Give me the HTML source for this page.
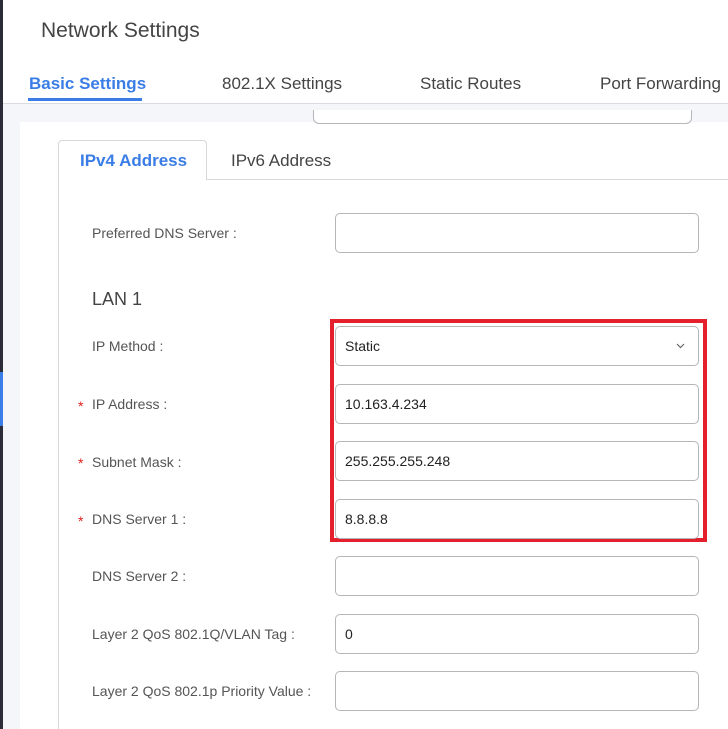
<!DOCTYPE html>
<html><head><meta charset="utf-8"><style>
*{box-sizing:border-box;margin:0;padding:0}
body{width:728px;height:729px;overflow:hidden;background:#f4f6f9;font-family:"Liberation Sans",sans-serif;position:relative}
.a{position:absolute}
.lab{position:absolute;left:92px;font-size:14px;color:#555;}
.ast{position:absolute;left:78px;color:#e02020;font-size:14px}
.in{position:absolute;left:335px;width:364px;height:40px;border:1px solid #b4b6ba;border-radius:5px;background:#fff;font-size:14px;color:#222;padding:11px 9px}
</style></head><body>
<div class="a" style="left:0;top:0;width:3px;height:729px;background:#2a2d37"></div>
<div class="a" style="left:0;top:372px;width:3px;height:54px;background:#3b7de6"></div>
<div class="a" style="left:3px;top:0;width:725px;height:104px;background:#fff;border-bottom:1px solid #d8dbe0"></div>
<div class="a" style="left:41px;top:19px;font-size:21px;color:#444">Network Settings</div>
<div class="a" style="left:29px;top:74px;font-size:17px;color:#3b7de6;font-weight:bold">Basic Settings</div>
<div class="a" style="left:28px;top:98px;width:114px;height:3px;background:#3b7de6"></div>
<div class="a" style="left:222px;top:74px;font-size:17px;color:#444">802.1X Settings</div>
<div class="a" style="left:420px;top:74px;font-size:17px;color:#444">Static Routes</div>
<div class="a" style="left:600px;top:74px;font-size:17px;color:#444;white-space:nowrap">Port Forwarding</div>
<div class="a" style="left:20px;top:122px;width:708px;height:607px;background:#fff"></div>
<div class="a" style="left:313px;top:110px;width:379px;height:14px;border:1px solid #b4b6ba;border-top:none;border-radius:0 0 6px 6px;background:#fff"></div>
<div class="a" style="left:58px;top:179px;width:670px;height:1px;background:#d8d8d8"></div>
<div class="a" style="left:58px;top:179px;width:1px;height:550px;background:#d8d8d8"></div>
<div class="a" style="left:58px;top:140px;width:149px;height:40px;border:1px solid #d8d8d8;border-bottom:none;border-radius:4px 4px 0 0;background:#fff"></div>
<div class="a" style="left:80px;top:151px;font-size:17px;color:#3b7de6;font-weight:bold">IPv4 Address</div>
<div class="a" style="left:231px;top:151px;font-size:17px;color:#444">IPv6 Address</div>
<div class="lab" style="top:225px">Preferred DNS Server :</div>
<div class="in" style="top:213px"></div>
<div class="a" style="left:92px;top:289px;font-size:18px;color:#444">LAN 1</div>
<div class="a" style="left:330px;top:319px;width:377px;height:223px;border:4px solid #e3202c"></div>
<div class="lab" style="top:338px">IP Method :</div>
<div class="in" style="top:326px">Static<svg style="position:absolute;right:13px;top:16px" width="9" height="6" viewBox="0 0 9 6"><path d="M1 1L4.5 4.5L8 1" fill="none" stroke="#666" stroke-width="1.2"/></svg></div>
<div class="ast" style="top:398px">*</div><div class="lab" style="top:396px">IP Address :</div>
<div class="in" style="top:384px">10.163.4.234</div>
<div class="ast" style="top:455px">*</div><div class="lab" style="top:454px">Subnet Mask :</div>
<div class="in" style="top:441px">255.255.255.248</div>
<div class="ast" style="top:513px">*</div><div class="lab" style="top:511px">DNS Server 1 :</div>
<div class="in" style="top:499px">8.8.8.8</div>
<div class="lab" style="top:568px">DNS Server 2 :</div>
<div class="in" style="top:556px"></div>
<div class="lab" style="top:626px">Layer 2 QoS 802.1Q/VLAN Tag :</div>
<div class="in" style="top:614px">0</div>
<div class="lab" style="top:683px">Layer 2 QoS 802.1p Priority Value :</div>
<div class="in" style="top:671px"></div>
</body></html>
